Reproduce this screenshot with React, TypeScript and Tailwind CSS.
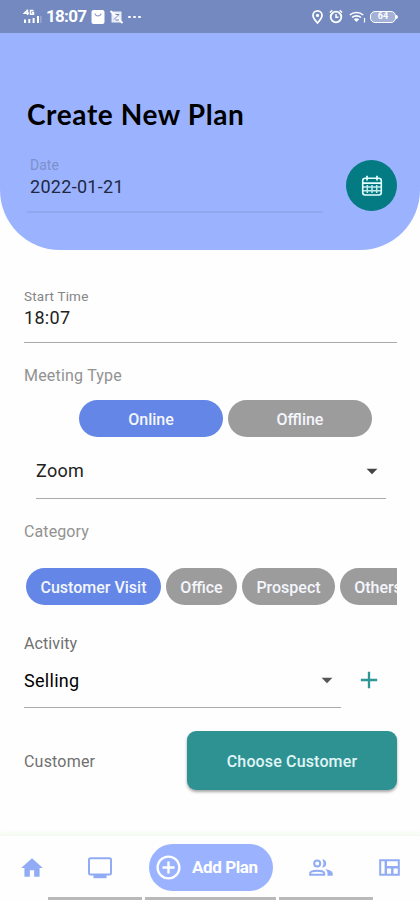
import React, { useState } from 'react';
import { MdHome, MdAdd, MdAddCircleOutline, MdArrowDropDown } from 'react-icons/md';

const meetingTypes = ['Online', 'Offline'];

const categories = [
  { name: 'Customer Visit', width: 'w-[135px]' },
  { name: 'Office', width: 'w-[71px]' },
  { name: 'Prospect', width: 'w-[93px]' },
  { name: 'Others', width: 'w-[76px]' },
];

const StatusBar: React.FC = () => (
  <div className="flex h-[33px] items-center justify-between bg-[#7389bf] pl-[23px] pr-[22px] text-white">
    <div className="flex items-center">
      <svg width="19" height="18" viewBox="0 0 19 18" fill="none" stroke="currentColor">
        <path d="M4.500 1.500V7M4.500 2L1.200 5.300H6M10.500 2.500H7.500v3.800h3V4.500H9" strokeWidth="1.500" />
        <path d="M2 11.500V15M6.300 11v4M10.600 10v5M15 8v7" strokeWidth="2" />
        <path d="M17.900 8v7" strokeWidth=".8" opacity=".5" />
      </svg>
      <span className="ml-[4px] text-[17px] font-bold leading-none tracking-[-0.7px]">18:07</span>
      <svg className="ml-[5px]" width="14" height="14" viewBox="0 0 14 14">
        <rect x=".5" y="0" width="13" height="14" rx="2" fill="currentColor" />
        <path d="M4 3.500c.6 3.200 5.400 3.200 6 0" fill="none" stroke="#8fa0cf" strokeWidth="1.200" />
      </svg>
      <svg className="ml-[5px]" width="13" height="14" viewBox="0 0 13 14">
        <path d="M1.500 1.500h10v11h-10z" fill="currentColor" opacity=".85" />
        <path d="M.5 1l12 12" stroke="currentColor" strokeWidth="1.800" />
        <path d="M4 9.500L9 4.500M5.500 4.500h3.500M5.500 10h3.500" stroke="#7389bf" strokeWidth="1" />
      </svg>
      <div className="ml-[5px] flex gap-[2px]">
        <span className="h-[2px] w-[3px] rounded-full bg-white" />
        <span className="h-[2px] w-[3px] rounded-full bg-white" />
        <span className="h-[2px] w-[3px] rounded-full bg-white" />
      </div>
    </div>

    <div className="flex items-center">
      <svg width="11" height="14" viewBox="0 0 11 14" fill="none" stroke="currentColor" strokeWidth="1.700">
        <path d="M5.500 13C3 10 1 8 1 5.400a4.500 4.500 0 019 0C10 8 8 10 5.500 13z" />
        <circle cx="5.500" cy="5.400" r="1.600" fill="currentColor" stroke="none" />
      </svg>
      <svg className="ml-[6px]" width="14" height="15" viewBox="0 0 14 15" fill="none" stroke="currentColor" strokeWidth="1.800">
        <circle cx="7" cy="8" r="5.300" />
        <path d="M7 5v3.300h2.500M.8 3.500L3.300 1.300M13.200 3.500l-2.500-2.200" strokeWidth="1.500" />
      </svg>
      <svg className="ml-[6px]" width="17" height="13" viewBox="0 0 17 13" fill="none" stroke="currentColor" strokeWidth="1.600">
        <path d="M.8 5c3.700-3.400 9.700-3.400 13.400 0M3 7.500c2.500-2.200 6.500-2.200 9 0" />
        <path d="M7.500 12L4.800 9.200c1.500-1.300 3.900-1.300 5.400 0z" fill="currentColor" stroke="none" />
        <path d="M15.500 8v4.500" strokeWidth="1.200" />
      </svg>
      <div className="ml-[4px] flex h-[12px] w-[26px] items-center justify-center rounded-[5px] border-[1.5px] border-white bg-[#a3b1d6] text-[9px] font-bold leading-none">
        64
      </div>
      <span className="h-[4px] w-[2px] rounded-r bg-white" />
    </div>
  </div>
);

const CalendarIcon: React.FC = () => (
  <svg width="22" height="22" viewBox="0 0 22 22" fill="none" stroke="currentColor">
    <rect x="1.700" y="3.200" width="18.600" height="16.800" rx="2.500" strokeWidth="1.600" />
    <path d="M1.700 8.200h18.600M6 .8v4.600M16 .8v4.600" strokeWidth="1.700" />
    <path d="M2 12h18M2 15.800h18M6.300 10v8M11 10v8M15.700 10v8" strokeWidth="1.500" opacity=".85" />
  </svg>
);

const MonitorIcon: React.FC = () => (
  <svg width="24" height="22" viewBox="0 0 24 22" fill="none" stroke="currentColor">
    <rect x="1" y="1.200" width="22" height="16.300" rx="1.500" strokeWidth="2" />
    <path d="M5.500 19.500h13" strokeWidth="3.400" />
  </svg>
);

const PeopleIcon: React.FC = () => (
  <svg width="24" height="18" viewBox="0 0 24 18" fill="none" stroke="currentColor">
    <circle cx="8.200" cy="4.500" r="3" strokeWidth="2" />
    <path d="M1.200 15.800v-1.600c0-3.400 14-3.400 14 0v1.600z" strokeWidth="2" />
    <path d="M13 .6c5.600-.9 5.600 8.700 0 7.800 1.900-2 1.900-5.800 0-7.800z" fill="currentColor" stroke="none" />
    <path d="M16 10.300c4.600.6 7.700 2 7.700 4.200v2.300h-5.200v-2.500c0-1.700-1-3-2.500-4z" fill="currentColor" stroke="none" />
  </svg>
);

const BoardIcon: React.FC = () => (
  <svg width="21" height="17" viewBox="0 0 21 17" fill="none" stroke="currentColor">
    <path d="M1.200 1.200h18.600v14.600H1.200z" strokeWidth="2" />
    <path d="M6.800 1v15M7 8.300h13M13.300 8.500V16" strokeWidth="2.400" />
  </svg>
);

const App: React.FC = () => {
  const [meetingType, setMeetingType] = useState('Online');
  const [category, setCategory] = useState('Customer Visit');

  return (
    <div className="flex h-[900px] w-[420px] flex-col overflow-hidden bg-[#fefefe] font-['Roboto',sans-serif] text-[#222]">
      <StatusBar />

      {/* Header */}
      <header className="h-[217px] rounded-b-[60px] bg-[#9bb3ff] pl-[27px] pr-[23px] pt-[63px]">
        <h1 className="h-[36px] whitespace-nowrap font-['Lato',sans-serif] text-[28px] font-bold leading-[36px] tracking-[0.6px] text-black">
          Create New Plan
        </h1>
        <div className="mt-[27px] flex justify-between">
          <div className="h-[54px] w-[296px] border-b-2 border-[#92a8ee] pl-[3px]">
            <div className="-mt-[2px] text-[14px] leading-[16px] text-[#7d8fca]">Date</div>
            <div className="mt-[4px] text-[18px] leading-[20px] tracking-[0.3px] text-[#20283f]">2022-01-21</div>
          </div>
          <button className="mt-[1px] flex size-[51px] items-center justify-center rounded-full bg-[#047a82] text-[#e4ffff]">
            <CalendarIcon />
          </button>
        </div>
      </header>

      <main className="h-[585px] shrink-0 px-[24px] pt-[38px]">
        {/* Start time */}
        <div className="h-[55px] w-[373px] border-b border-[#aaa]">
          <div className="text-[13.5px] leading-[16px] tracking-[0.2px] text-[#858585]">Start Time</div>
          <div className="mt-[4px] text-[18px] leading-[20px] tracking-[0.3px]">18:07</div>
        </div>

        {/* Meeting type */}
        <div className="mt-[23px] text-[16px] leading-[20px] tracking-[0.2px] text-[#929292]">Meeting Type</div>
        <div className="mt-[14px] flex gap-[5px] pl-[55px]">
          {meetingTypes.map((type) => (
            <button
              key={type}
              onClick={() => setMeetingType(type)}
              className={`h-[37px] w-[144px] rounded-full pt-[2px] text-[16px] font-medium text-[#f4f6fc] ${
                meetingType === type ? 'bg-[#6386e7]' : 'bg-[#9c9c9c]'
              }`}
            >
              {type}
            </button>
          ))}
        </div>
        <div className="ml-[12px] mt-[7px] flex h-[55px] w-[350px] items-center justify-between border-b border-[#aaa] pr-px">
          <span className="-mt-px text-[18px] tracking-[0.3px]">Zoom</span>
          <MdArrowDropDown className="-mt-px size-[26px] text-[#444]" />
        </div>

        {/* Category */}
        <div className="mt-[23px] text-[16px] leading-[20px] tracking-[0.1px] text-[#929292]">Category</div>
        <div className="mt-[26px] flex w-[373px] gap-[5px] overflow-hidden pl-[2px]">
          {categories.map((item) => (
            <button
              key={item.name}
              onClick={() => setCategory(item.name)}
              className={`h-[37px] shrink-0 whitespace-nowrap rounded-full pt-[2px] text-[16px] font-medium text-[#f4f6fc] ${item.width} ${
                category === item.name ? 'bg-[#6386e7]' : 'bg-[#9c9c9c]'
              }`}
            >
              {item.name}
            </button>
          ))}
        </div>

        {/* Activity */}
        <div className="mt-[29px] text-[16px] leading-[20px] tracking-[0.1px] text-[#707070]">Activity</div>
        <div className="-mt-px flex">
          <div className="flex h-[55px] w-[317px] items-center justify-between border-b border-[#aaa] pr-px">
            <span className="text-[18px] tracking-[0.3px] text-black">Selling</span>
            <MdArrowDropDown className="size-[26px] text-[#555]" />
          </div>
          <button className="ml-[14px] mt-[13px] flex size-[28px] items-center justify-center text-[#2f9795]">
            <MdAdd className="size-[28px]" />
          </button>
        </div>

        {/* Customer */}
        <div className="mt-[23px] flex w-[373px] items-center justify-between">
          <span className="pt-[2px] text-[16px] tracking-[0.2px] text-[#707070]">Customer</span>
          <button className="h-[59px] w-[210px] rounded-[9px] bg-[#2e9293] pt-[2px] text-[16px] font-medium tracking-[0.15px] text-[#e0f5f5] shadow-[0_2px_3px_rgba(0,0,0,0.35)]">
            Choose Customer
          </button>
        </div>
      </main>

      {/* Bottom navigation */}
      <nav className="flex h-[62px] shrink-0 items-center border-t border-[#f4faf1] bg-[#fefefe] pt-[2px] text-[#91abf5] shadow-[0_-2px_4px_rgba(235,250,230,0.6)]">
        <MdHome className="ml-[19px] size-[26px]" />
        <div className="ml-[43px]">
          <MonitorIcon />
        </div>
        <button className="ml-[37px] flex h-[47px] w-[124px] shrink-0 items-center rounded-full bg-[#9bb3ff] pl-[5px] text-white">
          <MdAddCircleOutline className="size-[29px]" />
          <span className="ml-[9px] whitespace-nowrap pt-px text-[17px] font-bold tracking-[-0.4px]">Add Plan</span>
        </button>
        <div className="ml-[36px]">
          <PeopleIcon />
        </div>
        <div className="ml-[46px]">
          <BoardIcon />
        </div>
      </nav>
      <div className="flex h-[3px] shrink-0 gap-[3px] pl-[48px]">
        <div className="w-[94px] bg-[#b9b9b9]" />
        <div className="w-[131px] bg-[#b9b9b9]" />
        <div className="w-[94px] bg-[#b9b9b9]" />
      </div>
    </div>
  );
};

export default App;
